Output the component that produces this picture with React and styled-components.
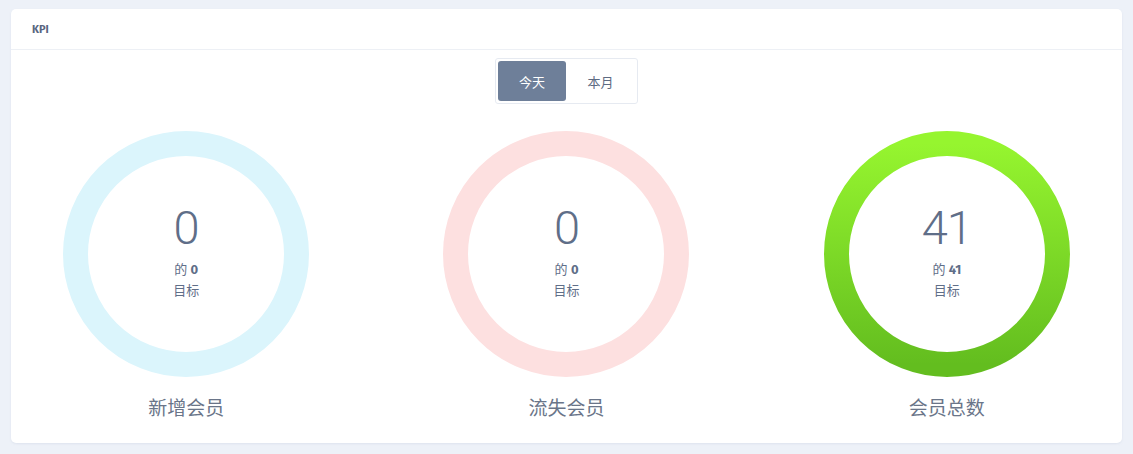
import React from 'react';
import styled, { createGlobalStyle } from 'styled-components';

const GlobalStyle = createGlobalStyle`
  body {
    margin: 0;
    background: #edf1f8;
    font-family: "Fira Sans", Roboto, "Noto Sans CJK SC", sans-serif;
  }
`;

const Page = styled.div`
  padding: 9px 11px 12px 11px;
`;

const Card = styled.div`
  background: #fff;
  border-radius: 5px;
  box-shadow: 0 1px 2px rgba(180, 190, 210, 0.25);
  overflow: hidden;
`;

const CardHeader = styled.div`
  height: 40px;
  display: flex;
  align-items: center;
  padding: 0 21px;
  border-bottom: 1px solid #edf0f5;
  font-size: 11px;
  font-weight: 700;
  color: #5a6680;
`;

const CardBody = styled.div`
  padding: 8px 0 22px;
  display: flex;
  flex-direction: column;
  align-items: center;
`;

const Toggle = styled.div`
  display: flex;
  padding: 2px;
  border: 1px solid #e6eaf1;
  border-radius: 3px;
`;

const ToggleButton = styled.div`
  width: ${p => (p.active ? '68px' : '69px')};
  height: 40px;
  display: flex;
  align-items: center;
  justify-content: center;
  border-radius: 3px;
  font-size: 13px;
  background: ${p => (p.active ? '#6e7f99' : 'transparent')};
  color: ${p => (p.active ? '#fff' : '#5e6b82')};
`;

const Row = styled.div`
  align-self: stretch;
  margin: 27px -15px 0;
  display: grid;
  grid-template-columns: repeat(3, 1fr);
`;

const Col = styled.div`
  display: flex;
  flex-direction: column;
  align-items: center;
`;

const Gauge = styled.div`
  position: relative;
  width: 246px;
  height: 246px;
`;

const GaugeCenter = styled.div`
  position: absolute;
  inset: 0;
  display: flex;
  flex-direction: column;
  align-items: center;
  justify-content: center;
  padding-bottom: 4px;
  color: #5f6e88;
`;

const Value = styled.div`
  font-size: 47px;
  font-weight: 300;
  line-height: 50px;
  font-family: Roboto, sans-serif;
  letter-spacing: -1px;
  margin-bottom: 6px;
`;

const Sub = styled.div`
  font-size: 13px;
  line-height: 21px;
  color: #5f6e88;
  b {
    font-weight: 700;
  }
`;

const Label = styled.div`
  margin-top: 20px;
  font-size: 19px;
  color: #6a7589;
  line-height: 24px;
`;

function Ring({ id, color, gradient }) {
  return (
    <svg width="246" height="246" viewBox="0 0 246 246">
      {gradient && (
        <defs>
          <linearGradient id={id} x1="0" y1="0" x2="0" y2="1">
            <stop offset="0%" stopColor="#96f52f" />
            <stop offset="100%" stopColor="#63bd1f" />
          </linearGradient>
        </defs>
      )}
      <circle
        cx="123"
        cy="123"
        r="110.5"
        fill="none"
        stroke={gradient ? `url(#${id})` : color}
        strokeWidth="25"
      />
    </svg>
  );
}

const items = [
  { id: 'g1', value: '0', target: '0', label: '新增会员', color: '#dbf5fc' },
  { id: 'g2', value: '0', target: '0', label: '流失会员', color: '#fde0e0' },
  { id: 'g3', value: '41', target: '41', label: '会员总数', gradient: true },
];

export default function App() {
  return (
    <Page>
      <GlobalStyle />
      <Card>
        <CardHeader>KPI</CardHeader>
        <CardBody>
          <Toggle>
            <ToggleButton active>今天</ToggleButton>
            <ToggleButton>本月</ToggleButton>
          </Toggle>
          <Row>
            {items.map(it => (
              <Col key={it.id}>
                <Gauge>
                  <Ring id={it.id} color={it.color} gradient={it.gradient} />
                  <GaugeCenter>
                    <Value>{it.value}</Value>
                    <Sub>的 <b>{it.target}</b></Sub>
                    <Sub>目标</Sub>
                  </GaugeCenter>
                </Gauge>
                <Label>{it.label}</Label>
              </Col>
            ))}
          </Row>
        </CardBody>
      </Card>
    </Page>
  );
}
